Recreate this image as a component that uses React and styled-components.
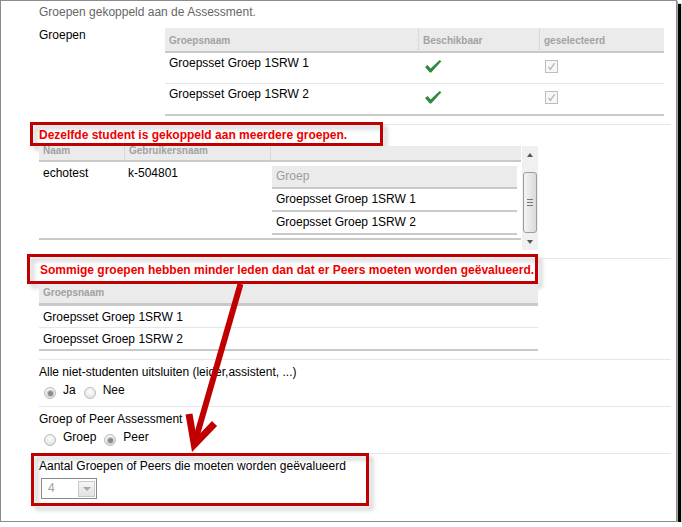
import React from 'react';
import styled, { createGlobalStyle } from 'styled-components';

const GlobalStyle = createGlobalStyle`
    html, body {
        margin: 0;
        padding: 0;
        background: #fff;
    }
    body {
        font-family: "Liberation Sans", Arial, sans-serif;
        font-size: 12px;
        color: #000;
    }
`;

const groups = ['Groepsset Groep 1SRW 1', 'Groepsset Groep 1SRW 2'];

const Check = () => (
    <CheckIcon width="17" height="13" viewBox="0 0 17 13">
        <path d="M0 7 L2.6 5 L5.6 8.4 L14.6 0 L16.4 1.2 L6.2 12.6 L4.8 12.6 Z" fill="#2e8a3e" />
    </CheckIcon>
);

const DisabledCheckbox = () => (
    <BoxIcon width="13" height="13" viewBox="0 0 13 13">
        <rect x="0.5" y="0.5" width="12" height="12" fill="#f7f7f7" stroke="#bdbdbd" />
        <polyline points="3.5,6.8 5.4,9.4 9.6,3.2" fill="none" stroke="#b3b3b3" strokeWidth="1.2" />
    </BoxIcon>
);

const RadioOption = ({checked, children}) => (
    <Option>
        <Radio $checked={checked} />
        {children}
    </Option>
);

const App = () => {
    return (
        <>
            <GlobalStyle />
            <Frame>
                <Title>Groepen gekoppeld aan de Assessment.</Title>

                <GroupsRow>
                    <FieldLabel>Groepen</FieldLabel>
                    <Table $w={499}>
                        <colgroup>
                            <Col $w={253} />
                            <Col $w={121} />
                            <Col $w={125} />
                        </colgroup>
                        <thead>
                            <tr>
                                <HeadCell>Groepsnaam</HeadCell>
                                <HeadCell>Beschikbaar</HeadCell>
                                <HeadCell>geselecteerd</HeadCell>
                            </tr>
                        </thead>
                        <tbody>
                            {groups.map((g, i) => (
                                <tr key={g}>
                                    <Cell $pad="3px 4px 12px" $thick={i === groups.length - 1}>{g}</Cell>
                                    <Cell $pad="3px 4px 12px" $thick={i === groups.length - 1}><Check /></Cell>
                                    <Cell $pad="3px 4px 12px" $thick={i === groups.length - 1}><DisabledCheckbox /></Cell>
                                </tr>
                            ))}
                        </tbody>
                    </Table>
                </GroupsRow>

                <Section $divided $pb={8}>
                    <Callout $w={353} $h={24} $m="-3px 0 0 -9px" $pad="3px 6px 0">
                        <CalloutText>Dezelfde student is gekoppeld aan meerdere groepen.</CalloutText>
                    </Callout>
                    <ScrollBox>
                        <ScrollContent>
                            <Table $w={482}>
                                <colgroup>
                                    <Col $w={85} />
                                    <Col $w={146} />
                                    <Col $w={251} />
                                </colgroup>
                                <thead>
                                    <tr>
                                        <HeadCell $pad="0 4px 4px" $lh={10}>Naam</HeadCell>
                                        <HeadCell $pad="0 4px 4px" $lh={10}>Gebruikersnaam</HeadCell>
                                        <HeadCell $pad="0 4px 4px" $lh={10}></HeadCell>
                                    </tr>
                                </thead>
                                <tbody>
                                    <tr>
                                        <Cell $thick $pad="4px 4px 3px">echotest</Cell>
                                        <Cell $thick $pad="4px 4px 3px">k-504801</Cell>
                                        <Cell $thick $pad="4px 3px 3px 2px">
                                            <Table $w={245}>
                                                <thead>
                                                    <tr>
                                                        <SubHeadCell>Groep</SubHeadCell>
                                                    </tr>
                                                </thead>
                                                <tbody>
                                                    {groups.map(g => (
                                                        <tr key={g}>
                                                            <Cell $thick>{g}</Cell>
                                                        </tr>
                                                    ))}
                                                </tbody>
                                            </Table>
                                        </Cell>
                                    </tr>
                                </tbody>
                            </Table>
                        </ScrollContent>
                        <Scrollbar>
                            <ScrollArrow />
                            <ScrollTrack>
                                <Thumb>
                                    <Grip />
                                    <Grip />
                                    <Grip />
                                </Thumb>
                            </ScrollTrack>
                            <ScrollArrow $down />
                        </Scrollbar>
                    </ScrollBox>
                </Section>

                <Section $divided $pb={8}>
                    <Callout $w={511} $h={30} $m="-5px 0 0 -12px" $pad="6px 10px 0">
                        <CalloutText>Sommige groepen hebben minder leden dan dat er Peers moeten worden geëvalueerd.</CalloutText>
                    </Callout>
                    <Table $w={499}>
                        <thead>
                            <tr>
                                <HeadCell $pad="3px 4px 4px" $bb={3}>Groepsnaam</HeadCell>
                            </tr>
                        </thead>
                        <tbody>
                            {groups.map((g, i) => (
                                <tr key={g}>
                                    <Cell $pad="4px 4px 2px" $thick={i === groups.length - 1}>{g}</Cell>
                                </tr>
                            ))}
                        </tbody>
                    </Table>
                </Section>

                <Section $divided $pt={5} $pb={7}>
                    <Text>Alle niet-studenten uitsluiten (leider,assistent, ...)</Text>
                    <RadioGroup>
                        <RadioOption checked>Ja</RadioOption>
                        <RadioOption>Nee</RadioOption>
                    </RadioGroup>
                </Section>

                <Section $divided $pt={5} $pb={7}>
                    <Text>Groep of Peer Assessment</Text>
                    <RadioGroup>
                        <RadioOption>Groep</RadioOption>
                        <RadioOption checked>Peer</RadioOption>
                    </RadioGroup>
                </Section>

                <Section $divided>
                    <Callout $w={338} $h={53} $m="-1px 0 0 -8px" $pad="3px 5px 0">
                        <Text>Aantal Groepen of Peers die moeten worden geëvalueerd</Text>
                        <Select>
                            4
                            <SelectButton />
                        </Select>
                    </Callout>
                </Section>

                <ArrowLayer width="677" height="522" viewBox="0 0 677 522">
                    <line x1="240.5" y1="284" x2="195.5" y2="440" stroke="#c00000" strokeWidth="6" />
                    <polyline points="189,414 194.3,444.6 214.5,423.5" fill="none" stroke="#c00000" strokeWidth="7" strokeLinejoin="miter" />
                </ArrowLayer>
            </Frame>
        </>
    );
};

const Frame = styled.div`
    position: relative;
    z-index: 0;
    box-sizing: border-box;
    width: 677px;
    height: 522px;
    padding: 4px 5px 0 38px;
    background: #fff;
    border: 1px solid #8c8c8c;
    box-shadow: 1px 1px 0 #a8a8a8, 4px 4px 1px #000;
`;

const Title = styled.div`
    color: #666;
    line-height: 15px;
`;

const GroupsRow = styled.div`
    display: flex;
    margin-top: 8px;
    padding-bottom: 8px;
`;

const FieldLabel = styled.div`
    width: 126px;
    flex-shrink: 0;
    line-height: 15px;
`;

const Section = styled.div`
    border-top: ${p => p.$divided ? '1px solid #e6e6e6' : 'none'};
    padding-top: ${p => p.$pt || 0}px;
    padding-bottom: ${p => p.$pb || 0}px;
`;

const Table = styled.table`
    width: ${p => p.$w}px;
    table-layout: fixed;
    border-collapse: separate;
    border-spacing: 0;
    font-size: 12px;
`;

const Col = styled.col`
    width: ${p => p.$w}px;
`;

const HeadCell = styled.th`
    padding: ${p => p.$pad || '7px 4px 4px'};
    line-height: ${p => p.$lh || 12}px;
    font-size: 10px;
    font-weight: bold;
    color: #a2a2a2;
    background: #ebebeb;
    text-align: left;
    vertical-align: top;
    white-space: nowrap;
    overflow: hidden;
    border-bottom: ${p => p.$bb || 2}px solid #c9c9c9;

    & + & {
        border-left: 1px solid #d8d8d8;
    }
`;

const SubHeadCell = styled(HeadCell)`
    padding: 3px 4px;
    line-height: 15px;
    font-size: 12px;
    font-weight: normal;
    color: #9c9c9c;
`;

const Cell = styled.td`
    padding: ${p => p.$pad || '3px 4px'};
    line-height: 15px;
    vertical-align: top;
    white-space: nowrap;
    border-bottom: ${p => p.$thick ? '2px solid #c9c9c9' : '1px solid #e6e6e6'};
`;

const CheckIcon = styled.svg`
    display: block;
    margin: 4px 0 -2px 3px;
`;

const BoxIcon = styled.svg`
    display: block;
    margin: 4px 0 -2px 2px;
`;

const Callout = styled.div`
    position: relative;
    box-sizing: border-box;
    width: ${p => p.$w}px;
    height: ${p => p.$h}px;
    margin: ${p => p.$m};
    padding: ${p => p.$pad};
    border: 3px solid #c00000;

    &::before {
        content: '';
        position: absolute;
        inset: -3px;
        border: 3px solid rgba(0, 0, 0, 0.2);
        transform: translate(4px, 4px);
        filter: blur(2px);
        z-index: -1;
        pointer-events: none;
    }
`;

const CalloutText = styled.div`
    color: #ee0000;
    font-weight: bold;
    line-height: 15px;
    white-space: nowrap;
`;

const ScrollBox = styled.div`
    display: flex;
    width: 499px;
    height: 104px;
    overflow: hidden;
`;

const ScrollContent = styled.div`
    width: 482px;
    flex-shrink: 0;
    align-self: flex-start;
`;

const Scrollbar = styled.div`
    width: 16px;
    margin-left: 1px;
    display: flex;
    flex-direction: column;
    background: #f0f0f0;
`;

const ScrollArrow = styled.div`
    height: 17px;
    display: flex;
    align-items: center;
    justify-content: center;

    &::after {
        content: '';
        border-left: 3.5px solid transparent;
        border-right: 3.5px solid transparent;
        ${p => p.$down ? 'border-top: 4px solid #555;' : 'border-bottom: 4px solid #555;'}
    }
`;

const ScrollTrack = styled.div`
    flex: 1;
    padding: 9px 1px 0;
`;

const Thumb = styled.div`
    box-sizing: border-box;
    height: 61px;
    border: 1px solid #9d9d9d;
    border-radius: 3px;
    background: linear-gradient(to right, #f4f4f4, #dadada);
    display: flex;
    flex-direction: column;
    align-items: center;
    justify-content: center;
    gap: 2px;
`;

const Grip = styled.span`
    width: 6px;
    height: 1px;
    background: #777;
`;

const Text = styled.div`
    line-height: 15px;
    white-space: nowrap;
`;

const RadioGroup = styled.div`
    display: flex;
    gap: 3px;
    margin-top: 3px;
`;

const Option = styled.label`
    display: inline-flex;
    align-items: flex-start;
    line-height: 15px;
`;

const Radio = styled.span`
    box-sizing: border-box;
    width: 12px;
    height: 12px;
    margin: 4px 7px 0 5px;
    flex-shrink: 0;
    border-radius: 50%;
    border: 1px solid #bcbcbc;
    background: radial-gradient(circle at 50% 35%, #fdfdfd, #dcdcdc);
    display: flex;
    align-items: center;
    justify-content: center;

    ${p => p.$checked && `
        &::after {
            content: '';
            width: 5px;
            height: 5px;
            border-radius: 50%;
            background: #8a8a8a;
            box-shadow: 0 0 0 1px #c4c4c4;
        }
    `}
`;

const Select = styled.div`
    box-sizing: border-box;
    width: 56px;
    height: 21px;
    margin: 4px 0 0 2px;
    padding: 0 1px 0 6px;
    border: 1px solid #8a8a8a;
    display: flex;
    align-items: center;
    justify-content: space-between;
    color: #a0a0a0;
    line-height: 19px;
    background: #fff;
`;

const SelectButton = styled.span`
    box-sizing: border-box;
    width: 17px;
    height: 16px;
    border: 1px solid #c8c8c8;
    background: linear-gradient(#f6f6f6, #e2e2e2);
    display: flex;
    align-items: center;
    justify-content: center;

    &::after {
        content: '';
        border-left: 4px solid transparent;
        border-right: 4px solid transparent;
        border-top: 4px solid #a8a8a8;
    }
`;

const ArrowLayer = styled.svg`
    position: absolute;
    left: -1px;
    top: -1px;
    z-index: 2;
    pointer-events: none;
`;

export default App;
